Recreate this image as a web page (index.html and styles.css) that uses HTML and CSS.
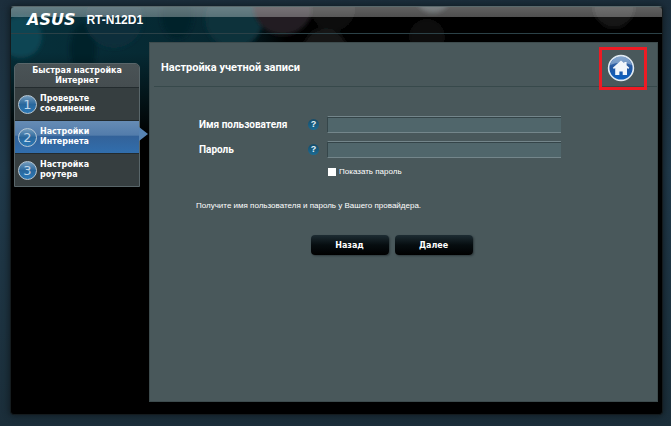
FILE: index.html
```html
<!DOCTYPE html>
<html lang="ru">
<head>
<meta charset="utf-8">
<title>ASUS RT-N12D1</title>
<link rel="stylesheet" href="styles.css">
</head>
<body>
<div class="shell">
  <svg class="backdrop" viewBox="0 0 652 130" preserveAspectRatio="xMinYMin slice" aria-hidden="true">
    <defs>
      <linearGradient id="teal" x1="0" x2="1" y1="0" y2="0">
        <stop offset="0" stop-color="#06303b"/>
        <stop offset="0.75" stop-color="#06262f"/>
        <stop offset="0.95" stop-color="#000"/>
      </linearGradient>
      <linearGradient id="fade" x1="0" x2="0" y1="0" y2="1">
        <stop offset="0.35" stop-color="#000" stop-opacity="0"/>
        <stop offset="1" stop-color="#000"/>
      </linearGradient>
      <filter id="soft"><feGaussianBlur stdDeviation="2"/></filter>
    </defs>
    <rect width="652" height="130" fill="#000"/>
    <rect width="290" height="130" fill="url(#teal)"/>
    <g filter="url(#soft)">
      <circle cx="10" cy="30" r="21" fill="#0a4452"/>
      <ellipse cx="72" cy="42" rx="13" ry="26" fill="#03202a"/>
      <circle cx="103" cy="12" r="29" fill="#092f3b"/>
      <ellipse cx="166" cy="8" rx="16" ry="24" fill="#03212a"/>
      <circle cx="223" cy="12" r="29" fill="#09303b"/>
      <circle cx="272" cy="-2" r="30" fill="#211f24"/>
      <circle cx="322" cy="2" r="22" fill="#111"/>
      <circle cx="314" cy="43" r="22" fill="#131414"/>
      <circle cx="416" cy="30" r="18" fill="#0a0a0a"/>
      <circle cx="422" cy="-12" r="18" fill="#2c3335"/>
      <circle cx="603" cy="0" r="21" fill="#181818"/>
    </g>
    <rect width="652" height="130" fill="url(#fade)"/>
  </svg>
  <header class="topbar">
    <span class="logo">ASUS</span>
    <h1 class="model">RT-N12D1</h1>
  </header>
  <div class="body">
    <nav class="steps" aria-label="Быстрая настройка Интернет">
      <h2 class="steps-title">Быстрая настройка<br>Интернет</h2>
      <a class="step" href="#check"><span class="num">1</span><span>Проверьте<br>соединение</span></a>
      <a class="step current" href="#internet" aria-current="step"><span class="num">2</span><span>Настройки<br>Интернета</span></a>
      <a class="step" href="#router"><span class="num">3</span><span>Настройка<br>роутера</span></a>
    </nav>
    <main class="panel">
      <div class="panel-head">
        <h2 class="title">Настройка учетной записи</h2>
        <a class="home" href="#home" aria-label="Домой">
          <svg width="28" height="28" viewBox="0 0 28 28" aria-hidden="true">
            <defs>
              <linearGradient id="ball" x1="0" x2="0" y1="0" y2="1">
                <stop offset="0" stop-color="#5d86ba"/>
                <stop offset="0.45" stop-color="#24579f"/>
                <stop offset="1" stop-color="#0860c4"/>
              </linearGradient>
            </defs>
            <circle cx="14" cy="14" r="12.4" fill="url(#ball)" stroke="#dfe9f2" stroke-width="1.6"/>
            <path d="M3 11a11.4 11.4 0 0 1 22 0Q14 6 3 11Z" fill="#a9c2df" opacity=".55"/>
            <path d="M14 6.5 5.8 13.7l1.1 1.2 1.3-1V21h4.2v-3.6h3.3V21h4.3v-7.1l1.2 1 1.1-1.2-2.7-2.4V8h-2.3v1.3Z" fill="#f0f5fb"/>
          </svg>
        </a>
      </div>
      <form class="form">
        <label class="name" for="user">Имя пользователя</label>
        <button class="help" type="button" aria-label="Справка: имя пользователя">?</button>
        <input class="field" id="user" type="text">
        <label class="name" for="pass">Пароль</label>
        <button class="help" type="button" aria-label="Справка: пароль">?</button>
        <input class="field" id="pass" type="password">
        <label class="show"><input class="tick" type="checkbox">Показать пароль</label>
      </form>
      <p class="note">Получите имя пользователя и пароль у Вашего провайдера.</p>
      <div class="actions">
        <button class="btn" type="button">Назад</button>
        <button class="btn" type="button">Далее</button>
      </div>
    </main>
  </div>
</div>
</body>
</html>
```
FILE: styles.css
```css
* { box-sizing: border-box; }

body {
  margin: 0;
  min-height: 100vh;
  padding: 6px 8px 11px 10px;
  display: flex;
  background: linear-gradient(#1c2e3c, #20394a 40%, #1b2e3a);
  font-family: Roboto, Arial, sans-serif;
  color: #fff;
}

h1, h2, p { margin: 0; }

.shell {
  position: relative;
  flex: 1;
  display: flex;
  flex-direction: column;
  overflow: hidden;
  border: 1px solid #141b1e;
  border-top-color: #59686b;
  border-radius: 4px;
  background: #000;
  box-shadow: 0 0 6px 1px #111c22;
}

.backdrop {
  position: absolute;
  top: 0;
  left: 0;
  width: 100%;
  height: 130px;
}

.topbar {
  position: relative;
  display: flex;
  align-items: center;
  gap: 11px;
  height: 27px;
  padding-left: 16px;
  border-bottom: 1px solid #2b4147;
  background: linear-gradient(rgba(255, 255, 255, 0.38), rgba(255, 255, 255, 0.31)) top / 100% 10px no-repeat;
}

.logo {
  font: italic bold 16px/20px "DejaVu Sans", sans-serif;
}

.model {
  font: bold 12px/20px "Liberation Sans", Arial, sans-serif;
}

.body {
  position: relative;
  flex: 1;
  display: flex;
  align-items: flex-start;
  gap: 9px;
  padding: 8px 4px 12px 3px;
}

.steps {
  flex: 0 0 126px;
  margin-top: 21px;
  border: 1px solid #59666a;
  border-radius: 5px 5px 0 0;
  background: #363e40;
  font: bold 8px/10px "DejaVu Sans", sans-serif;
}

.steps-title {
  padding: 2px 0 1px;
  border-radius: 4px 4px 0 0;
  background: linear-gradient(#4a5356, #454d50);
  font-size: 8px;
  line-height: 10px;
  text-align: center;
}

.step {
  position: relative;
  display: flex;
  align-items: center;
  gap: 3px;
  height: 33px;
  padding-left: 3px;
  border-top: 1px solid #232b2e;
  color: #fff;
  text-decoration: none;
}

.current {
  background: linear-gradient(#668cb5, #527cab 45%, #336299 46%, #316ead);
}

.current::after {
  content: "";
  position: absolute;
  left: 100%;
  top: 6px;
  border: solid transparent;
  border-width: 7px 0 7px 9px;
  border-left-color: #5683b3;
}

.num {
  width: 19px;
  height: 19px;
  border: 1px solid #b7c8d5;
  border-radius: 50%;
  background: linear-gradient(#749cbd, #29679c 50%, #2c79b7);
  color: #bdd5e8;
  font: 13px/17px "DejaVu Sans", sans-serif;
  text-align: center;
}

.panel {
  flex: 1;
  align-self: stretch;
  min-width: 0;
  border: 1px solid #3d4b4d;
  background: #49585b;
}

.panel-head {
  display: flex;
  align-items: center;
  justify-content: space-between;
  height: 44px;
  margin-left: 4px;
  padding: 7px 10px 0 7px;
  border-bottom: 1px solid #37494b;
}

.title {
  font-size: 11px;
  line-height: 14px;
}

.home {
  display: flex;
  align-items: center;
  justify-content: center;
  width: 48px;
  height: 43px;
  padding-right: 5px;
  position: relative;
  border: 3px solid #ee1b24;
}

.form {
  display: grid;
  grid-template-columns: 102px 12px minmax(0, 1fr);
  column-gap: 7px;
  row-gap: 8px;
  align-items: center;
  padding: 29px 96px 0 49px;
}

.name {
  font-size: 10px;
  font-weight: bold;
  line-height: 12px;
}

.help {
  width: 11px;
  height: 11px;
  padding: 0;
  border: 0;
  border-radius: 50%;
  background: linear-gradient(#164b68, #1b6b93);
  color: #e5f2f8;
  font: bold 9px/11px "Liberation Sans", Arial, sans-serif;
}

.field {
  width: 100%;
  height: 17px;
  padding: 0 4px;
  border: 1px solid #74868b;
  border-right: 0;
  border-left: 1px solid #35464a;
  background: #50666b;
  box-shadow: inset 0 1px #344448;
  color: #fff;
  font: 10px Roboto, Arial, sans-serif;
}

.show {
  grid-column: 3;
  display: flex;
  align-items: center;
  gap: 3px;
  padding: 0 0 0 1px;
  font: 8px/12px "Liberation Sans", Arial, sans-serif;
}

.tick {
  appearance: none;
  width: 8px;
  height: 8px;
  margin: 0;
  background: #fff;
}

.tick:checked { background: #2c79b7; }

.note {
  padding: 22px 46px 0;
  font: 8px/12px "Liberation Sans", Arial, sans-serif;
}

.actions {
  display: flex;
  justify-content: center;
  gap: 6px;
  padding: 23px 24px 0 0;
}

.btn {
  width: 78px;
  height: 20px;
  padding: 0;
  border: 0;
  border-radius: 4px;
  background: linear-gradient(#1d2c33, #060d10 50%, #000);
  box-shadow: 1px 1px 2px #2e393c;
  color: #fff;
  font: bold 8px "DejaVu Sans", sans-serif;
}
```
